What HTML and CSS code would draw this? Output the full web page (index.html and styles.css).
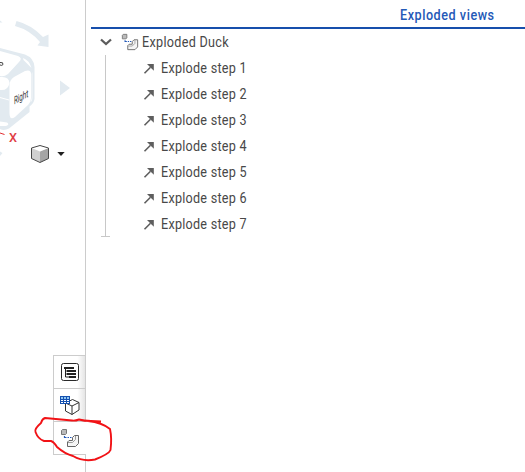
FILE: index.html
```html
<!DOCTYPE html>
<html lang="en">
<head>
<meta charset="utf-8">
<title>Exploded views</title>
<link rel="stylesheet" href="styles.css">
</head>
<body>
<svg class="defs" width="0" height="0" aria-hidden="true">
  <symbol id="arrow" viewBox="0 0 12 12"><path d="M1.5 11.300 7.500 5.300" stroke="#5e5e5e" stroke-width="1.6" fill="none"/><path d="M4 2H10.800V8.800Z" fill="#5e5e5e"/></symbol>
  <symbol id="explode" viewBox="0 0 20 20">
    <path d="M1.500 2.500 2.500 1.500H6.500V5.500L5.500 6.500H1.500Z" fill="#bbb" stroke="#777"/>
    <path d="M4.500 8v1.500H6.500M7.500 9.500h1.500M10 9.500h1.500" fill="none" stroke="#2459b8" stroke-width="1.200"/>
    <path d="M7.500 14 9 12.500H12.500V9.500L14.500 7.500H18.500V15.500L15.500 18.500H7.500Z" fill="#f5f5f5" stroke="#666"/>
    <path d="M8 14.500H12.500L15.500 11.500V8" fill="none" stroke="#888" stroke-width=".8"/>
  </symbol>
</svg>
<main class="app">
  <aside class="side">
    <svg class="viewport" width="85" height="170" viewBox="0 0 85 170">
      <g fill="#e2eaf0">
        <path d="M16.500 21Q31 24.500 43 37L48.500 34.500V47L37.500 45.500 40 42Q30 30 15 26Z"/>
        <path d="M0 20.500 2.500 22.500H0Z"/>
        <path d="M60 80.500 70 88 60 95.500Z"/>
        <path d="M0 151.500 2.500 153 0 156Z"/>
        <path d="M0 48 25 54.500Q34 58 34.500 67V99Q34 103 29.500 106.500V112L9 128.500Q4 131 0 129Z"/>
      </g>
      <g fill="#fff">
        <path d="M0 51 18 56Q23 58 19 62L8 74Q4 77 0 76Z"/>
        <path d="M23 58Q29 60 31.500 68L23.500 60Z"/>
        <path d="M9.500 84Q10 80 14 77L25 71Q31 69 31 74V98Q31 102 28 105L15 117Q9.500 121 9.500 113Z"/>
        <path d="M31.500 74V98L30.500 102 32 101 32.500 98V72Z" opacity=".6"/>
        <path d="M0 77Q9 76 9.500 83 8 91 0 90Z"/>
        <path d="M0 121.500 7 122.500Q10 124.500 6 126L0 126Z"/>
      </g>
      <path d="M0 97.500l9 2.500" stroke="#fff" fill="none"/>
      <text class="cube-label" transform="matrix(.78 -.42 0 1.350 14 104.500)">Right</text>
      <path d="M0 62.500Q3.500 62 3 64.500 2 66 0 65" fill="none" stroke="#444"/>
      <path d="M0 133 4.500 134.500" stroke="#e12c30" fill="none"/>
      <text class="axis" x="9" y="142" textLength="8" lengthAdjust="spacingAndGlyphs">X</text>
      <path d="M31.500 148 40 145.500 48.500 148V158.500L40 162.500 31.500 158.500Z" fill="#d0d0d0"/>
      <path d="M40 151.500 48.500 148V158.500L40 162.500Z" fill="#a5a5a5"/>
      <path d="M31.500 148 40 145.500 48.500 148 40 151.500Z" fill="#fff"/>
      <path d="M31.500 148 40 145.500 48.500 148V158.500L40 162.500 31.500 158.500Z" fill="none" stroke="#484848"/>
      <path d="M57.300 152H64.700L61 156Z" fill="#202020"/>
    </svg>
    <nav class="tabs">
      <div class="tab"><svg width="20" height="20" viewBox="0 0 20 20"><rect x="1.500" y="1.500" width="17" height="17" rx="2" fill="#fff" stroke="#292929"/><path d="M4 6h10M7 9h9M7 12h9M9 15h7" stroke="#222" stroke-width="2"/><path d="M5.500 6v9H9M5.500 9H8M5.500 12H8" fill="none" stroke="#222"/></svg></div>
      <div class="tab"><svg width="20" height="22" viewBox="0 0 20 22"><path d="M5.500 9 12.500 5.500 19 8.500V16L12 20.500 5.500 17ZM5.500 9 12 12 19 8.500M12 12V20.500" fill="#fff" stroke="#333"/><path d="M0 2H10V10H0Z" fill="#1551b0"/><path d="M1 3h2v2H1zM4 3h2v2H4zM7 3h2v2H7z" fill="#91c8f2"/><path d="M1 6h2v1H1zM4 6h2v1H4zM7 6h2v1H7zM1 8h2v1H1zM4 8h2v1H4zM7 8h2v1H7z" fill="#fff"/></svg></div>
      <div class="tab active"><svg width="20" height="20"><use href="#explode"/></svg></div>
    </nav>
  </aside>
  <section class="panel">
    <header class="heading"><span>Exploded views</span></header>
    <div class="group"><svg class="chevron" width="14" height="10" viewBox="0 0 14 10"><path d="M2 2.500 7 7 12 2.500" fill="none" stroke="#5c5c5c" stroke-width="2.300"/></svg><svg class="group-icon" width="18" height="18"><use href="#explode"/></svg><span>Exploded Duck</span></div>
    <div class="children">
      <div class="rail"></div>
      <ul class="steps">
        <li><svg width="12" height="12"><use href="#arrow"/></svg><span>Explode step 1</span></li>
        <li><svg width="12" height="12"><use href="#arrow"/></svg><span>Explode step 2</span></li>
        <li><svg width="12" height="12"><use href="#arrow"/></svg><span>Explode step 3</span></li>
        <li><svg width="12" height="12"><use href="#arrow"/></svg><span>Explode step 4</span></li>
        <li><svg width="12" height="12"><use href="#arrow"/></svg><span>Explode step 5</span></li>
        <li><svg width="12" height="12"><use href="#arrow"/></svg><span>Explode step 6</span></li>
        <li><svg width="12" height="12"><use href="#arrow"/></svg><span>Explode step 7</span></li>
      </ul>
    </div>
  </section>
  <svg class="annotation" width="90" height="67" viewBox="0 0 90 67"><path d="M71 16.500 61 16Q54 16 49 14.500Q45 16 42 15.500L15 13Q12 14 11 18Q4 24 5.500 27Q8 34 14 36L21 36Q24 37 27 42Q35 49 43 51Q53 57 65 54.500Q79 49 80.500 45Q82 33 80 24Q72 17.500 58 16" fill="none" stroke="#f11216" stroke-width="1.900" stroke-linejoin="round"/></svg>
</main>
</body>
</html>
```
FILE: styles.css
```css
* { box-sizing: border-box; }
body { margin: 0; background: #fff; font-family: Roboto, sans-serif; font-size: 14px; color: #484848; }
.defs { position: absolute; }
.app { position: relative; display: flex; width: 525px; height: 472px; overflow: hidden; }
.side { width: 86px; display: flex; flex-direction: column; background: linear-gradient(#ccc, #ccc) right / 1px 100% no-repeat; }
.viewport { flex: none; margin-bottom: 185px; }
.cube-label { font-size: 8px; fill: #333; }
.axis { font-size: 13px; font-weight: 500; fill: #e04045; }
.tabs { margin-left: 53px; width: 33px; }
.tab { height: 33px; padding: 0 0 0 6px; display: flex; align-items: center; border: 1px solid #ccc; border-bottom: 0; background: linear-gradient(to right, #fff 75%, #e5e5e5); }
.tab.active { height: 34px; border-right: 0; border-bottom: 1px solid #ccc; background: #fff; }
.panel { width: 434px; margin-left: 5px; }
.heading { height: 29px; padding: 7px 0 0 309px; border-bottom: 2px solid #174fac; color: #2459b7; font-weight: 500; line-height: 17px; white-space: nowrap; }
.heading span, .group span, .steps span { display: inline-block; transform: scaleX(.9); transform-origin: left; letter-spacing: .28px; }
.heading span { letter-spacing: .6px; }
.group { height: 26px; display: flex; align-items: center; padding-left: 8px; white-space: nowrap; }
.chevron { margin-right: 8px; }
.group-icon { margin-right: 3px; }
.group span { letter-spacing: .34px; }
.children { display: flex; }
.rail { width: 9px; height: 182px; margin-left: 10px; background: linear-gradient(#c8c8c8, #c8c8c8) 4px 0 / 1px 100% no-repeat; border-bottom: 1px solid #c8c8c8; }
.steps { list-style: none; margin: 0 0 0 33px; padding: 0; }
.steps li { height: 26px; display: flex; align-items: center; gap: 6px; white-space: nowrap; }
.annotation { position: absolute; left: 30px; top: 405px; }
```
